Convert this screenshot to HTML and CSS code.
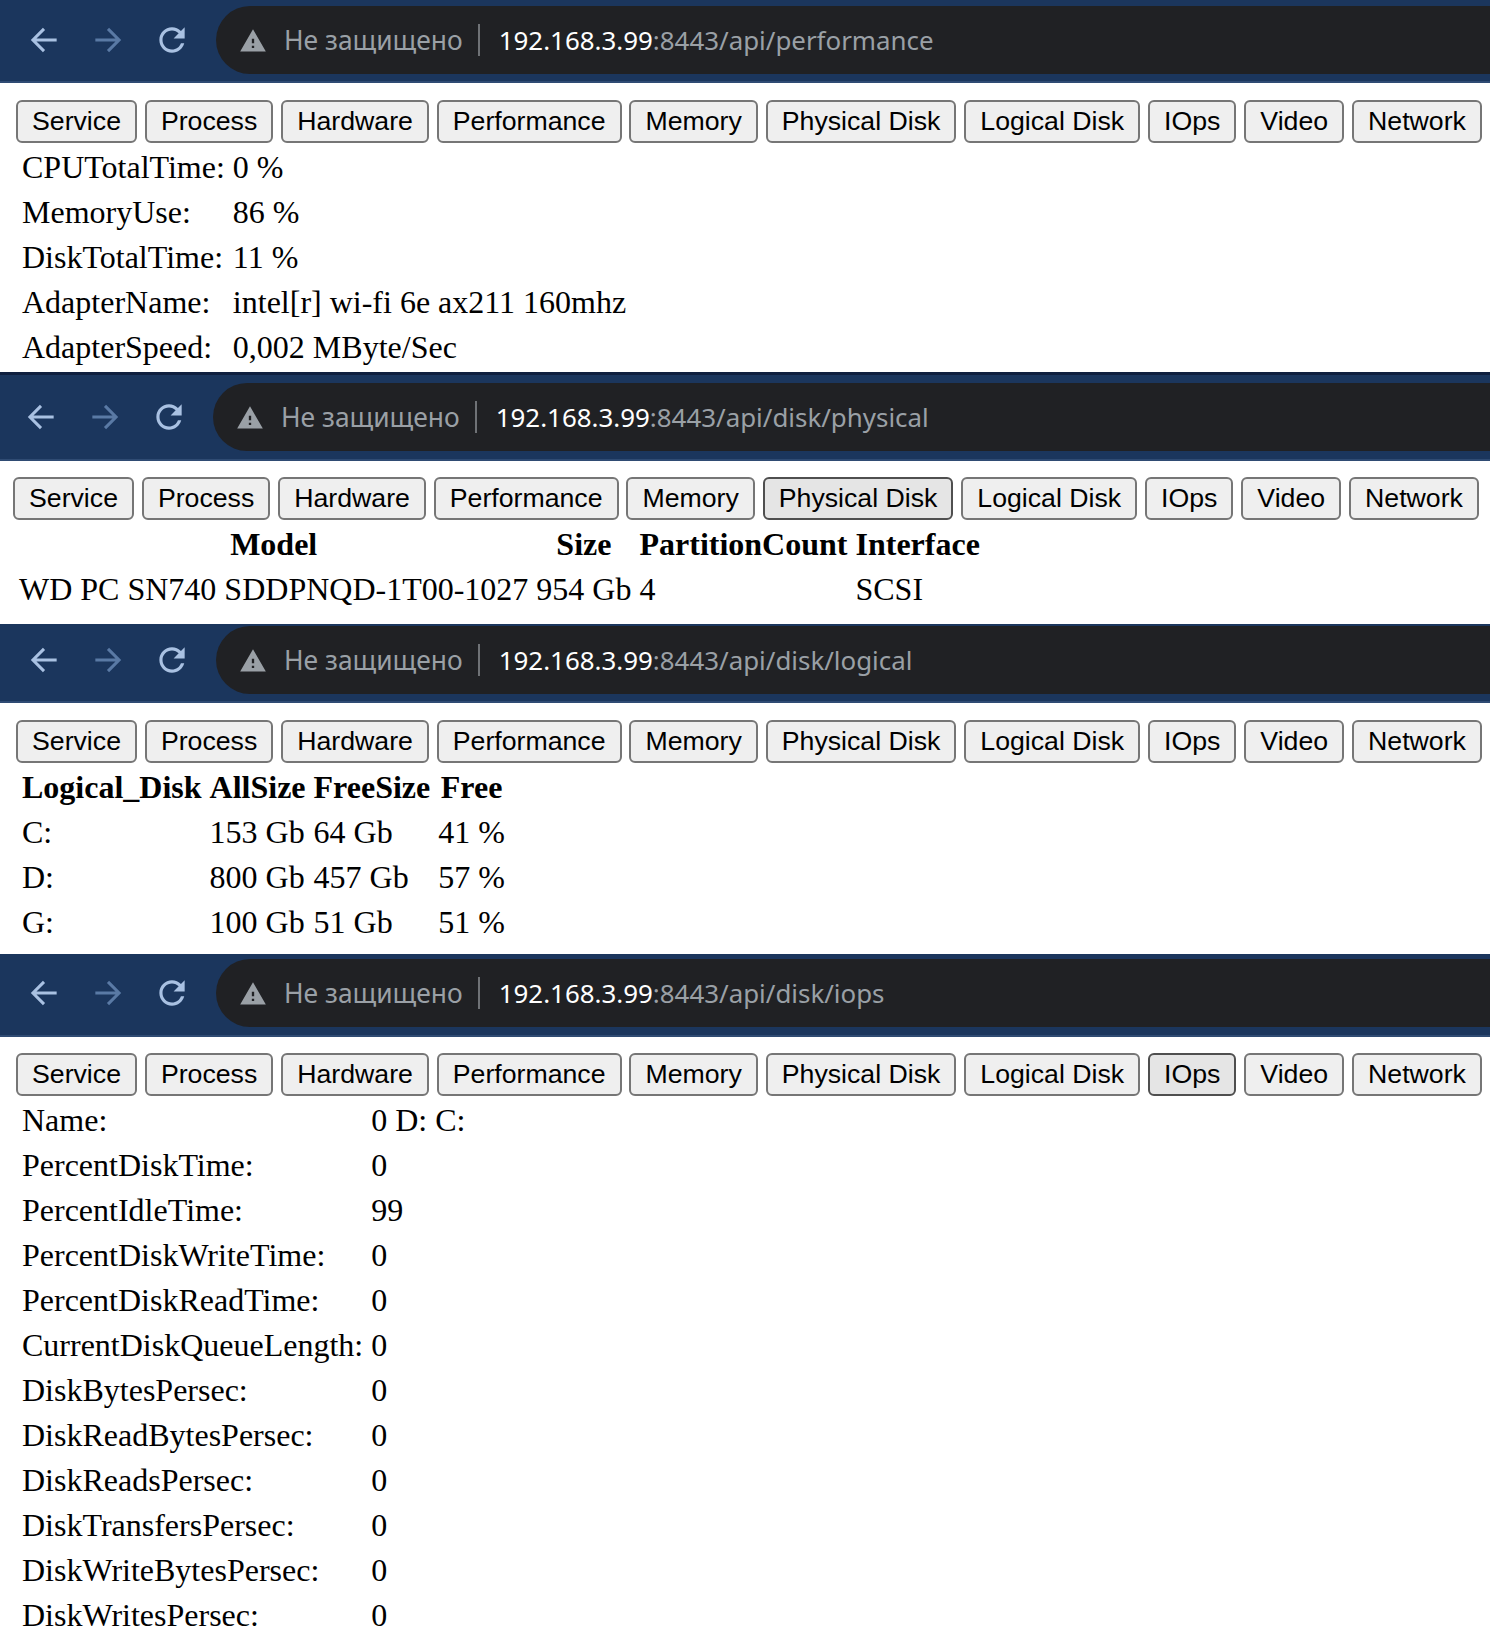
FILE: index.html
```html
<!DOCTYPE html>
<html lang="en">
<head>
<meta charset="UTF-8" />
<meta name="viewport" content="width=device-width, initial-scale=1" />
<title>API screenshots</title>
<link rel="stylesheet" href="styles.css">
</head>
<body>

<svg class="defs" width="0" height="0" aria-hidden="true">
  <symbol id="backIcon" viewBox="0 0 24 24"><path d="M20 12H5M12 5l-7 7 7 7" fill="none" stroke="currentColor" stroke-width="1.9"/></symbol>
  <symbol id="forwardIcon" viewBox="0 0 24 24"><path d="M4 12h15M12 5l7 7-7 7" fill="none" stroke="currentColor" stroke-width="1.9"/></symbol>
  <symbol id="reloadIcon" viewBox="0 0 24 24"><path d="M17.65 6.35C16.2 4.9 14.21 4 12 4c-4.42 0-7.99 3.58-7.99 8s3.57 8 7.99 8c3.73 0 6.84-2.55 7.73-6h-2.08c-.82 2.33-3.04 4-5.65 4-3.31 0-6-2.69-6-6s2.69-6 6-6c1.66 0 3.14.69 4.22 1.78L13 11h7V4l-2.35 2.35z" fill="currentColor"/></symbol>
  <symbol id="warnIcon" viewBox="0 0 24 24"><path d="M1 21h22L12 2 1 21zm12-3h-2v-2h2v2zm0-4h-2v-4h2v4z" fill="currentColor"/></symbol>
</svg>

<section class="shot shot-performance">
  <div class="toolbar">
    <svg class="nav-icon"><use href="#backIcon"/></svg>
    <svg class="nav-icon nav-icon-off"><use href="#forwardIcon"/></svg>
    <svg class="nav-icon"><use href="#reloadIcon"/></svg>
    <div class="omnibox">
      <svg class="warn-icon"><use href="#warnIcon"/></svg>
      <span class="not-secure">Не защищено</span>
      <span class="url"><span class="host">192.168.3.99</span>:8443/api/performance</span>
    </div>
  </div>
  <nav class="tabs">
    <button>Service</button><button>Process</button><button>Hardware</button><button>Performance</button><button>Memory</button><button>Physical Disk</button><button>Logical Disk</button><button>IOps</button><button>Video</button><button>Network</button>
  </nav>
  <table>
    <tr><td>CPUTotalTime:</td><td>0 %</td></tr>
    <tr><td>MemoryUse:</td><td>86 %</td></tr>
    <tr><td>DiskTotalTime:</td><td>11 %</td></tr>
    <tr><td>AdapterName:</td><td>intel[r] wi-fi 6e ax211 160mhz</td></tr>
    <tr><td>AdapterSpeed:</td><td>0,002 MByte/Sec</td></tr>
  </table>
</section>

<section class="shot shot-physical">
  <div class="toolbar">
    <svg class="nav-icon"><use href="#backIcon"/></svg>
    <svg class="nav-icon nav-icon-off"><use href="#forwardIcon"/></svg>
    <svg class="nav-icon"><use href="#reloadIcon"/></svg>
    <div class="omnibox">
      <svg class="warn-icon"><use href="#warnIcon"/></svg>
      <span class="not-secure">Не защищено</span>
      <span class="url"><span class="host">192.168.3.99</span>:8443/api/disk/physical</span>
    </div>
  </div>
  <nav class="tabs">
    <button>Service</button><button>Process</button><button>Hardware</button><button>Performance</button><button>Memory</button><button class="active">Physical Disk</button><button>Logical Disk</button><button>IOps</button><button>Video</button><button>Network</button>
  </nav>
  <table>
    <tr><th>Model</th><th>Size</th><th>PartitionCount</th><th>Interface</th></tr>
    <tr><td>WD PC SN740 SDDPNQD-1T00-1027</td><td>954 Gb</td><td>4</td><td>SCSI</td></tr>
  </table>
</section>

<section class="shot shot-logical">
  <div class="toolbar">
    <svg class="nav-icon"><use href="#backIcon"/></svg>
    <svg class="nav-icon nav-icon-off"><use href="#forwardIcon"/></svg>
    <svg class="nav-icon"><use href="#reloadIcon"/></svg>
    <div class="omnibox">
      <svg class="warn-icon"><use href="#warnIcon"/></svg>
      <span class="not-secure">Не защищено</span>
      <span class="url"><span class="host">192.168.3.99</span>:8443/api/disk/logical</span>
    </div>
  </div>
  <nav class="tabs">
    <button>Service</button><button>Process</button><button>Hardware</button><button>Performance</button><button>Memory</button><button>Physical Disk</button><button>Logical Disk</button><button>IOps</button><button>Video</button><button>Network</button>
  </nav>
  <table>
    <tr><th>Logical_Disk</th><th>AllSize</th><th>FreeSize</th><th>Free</th></tr>
    <tr><td>C:</td><td>153 Gb</td><td>64 Gb</td><td>41 %</td></tr>
    <tr><td>D:</td><td>800 Gb</td><td>457 Gb</td><td>57 %</td></tr>
    <tr><td>G:</td><td>100 Gb</td><td>51 Gb</td><td>51 %</td></tr>
  </table>
</section>

<section class="shot shot-iops">
  <div class="toolbar">
    <svg class="nav-icon"><use href="#backIcon"/></svg>
    <svg class="nav-icon nav-icon-off"><use href="#forwardIcon"/></svg>
    <svg class="nav-icon"><use href="#reloadIcon"/></svg>
    <div class="omnibox">
      <svg class="warn-icon"><use href="#warnIcon"/></svg>
      <span class="not-secure">Не защищено</span>
      <span class="url"><span class="host">192.168.3.99</span>:8443/api/disk/iops</span>
    </div>
  </div>
  <nav class="tabs">
    <button>Service</button><button>Process</button><button>Hardware</button><button>Performance</button><button>Memory</button><button>Physical Disk</button><button>Logical Disk</button><button class="active">IOps</button><button>Video</button><button>Network</button>
  </nav>
  <table>
    <tr><td>Name:</td><td>0 D: C:</td></tr>
    <tr><td>PercentDiskTime:</td><td>0</td></tr>
    <tr><td>PercentIdleTime:</td><td>99</td></tr>
    <tr><td>PercentDiskWriteTime:</td><td>0</td></tr>
    <tr><td>PercentDiskReadTime:</td><td>0</td></tr>
    <tr><td>CurrentDiskQueueLength:</td><td>0</td></tr>
    <tr><td>DiskBytesPersec:</td><td>0</td></tr>
    <tr><td>DiskReadBytesPersec:</td><td>0</td></tr>
    <tr><td>DiskReadsPersec:</td><td>0</td></tr>
    <tr><td>DiskTransfersPersec:</td><td>0</td></tr>
    <tr><td>DiskWriteBytesPersec:</td><td>0</td></tr>
    <tr><td>DiskWritesPersec:</td><td>0</td></tr>
  </table>
</section>

</body>
</html>
```

FILE: styles.css
```css
html, body {
  margin: 0;
  background: #fff;
  overflow: hidden;
}
body {
  font-family: "Liberation Serif", serif;
  font-size: 32px;
  color: #000;
}
.defs {
  display: block;
  height: 0;
}

/* each section is one browser window */
.shot {
  overflow: hidden;
}
.shot-performance {
  height: 372px;
}
.shot-physical {
  height: 252px;
  border-top: 3px solid #10203f;
  box-sizing: border-box;
}
.shot-logical {
  height: 330px;
}
.shot-iops {
  height: 696px;
}

.toolbar {
  display: flex;
  align-items: center;
  gap: 26px;
  box-sizing: border-box;
  height: 83px;
  padding: 6px 0 7px 25px;
  background: #1b365d;
  border-bottom: 2px solid #2f4b73;
}
.shot-physical .toolbar {
  height: 86px;
  padding: 8px 0 8px 22px;
}
.shot-logical .toolbar {
  height: 79px;
  padding: 2px 0 7px 25px;
}
.shot-iops .toolbar {
  padding: 5px 0 8px 25px;
}
.nav-icon {
  flex: none;
  width: 38px;
  height: 38px;
  color: #a9c1e2;
}
.nav-icon-off {
  color: #5a7aa5;
}
.omnibox {
  flex: 1;
  display: flex;
  align-items: center;
  align-self: stretch;
  margin-left: -1px;
  padding-left: 23px;
  background: #202124;
  border-radius: 34px 0 0 34px;
  font-family: "Noto Sans", sans-serif;
  font-size: 26.4px;
  white-space: nowrap;
  color: #9aa0a6;
}
.warn-icon {
  flex: none;
  width: 28px;
  height: 28px;
  margin-top: 2px;
  color: #9aa0a6;
}
.not-secure {
  margin-left: 17px;
  padding-right: 15px;
  border-right: 2px solid #6f7276;
  line-height: 32px;
}
.url {
  margin-left: 19px;
  font-size: 25.9px;
}
.host {
  color: #fff;
}

.tabs {
  display: flex;
  gap: 7.9px;
  padding: 17px 0 0 16px;
}
.shot-physical .tabs {
  padding: 16px 0 0 13px;
}
.shot-iops .tabs {
  padding-top: 16px;
}
button {
  flex: none;
  height: 43px;
  padding: 0 14px;
  font-family: "Liberation Sans", Arial, sans-serif;
  font-size: 26.7px;
  color: #000;
  background: #efefef;
  border: 2px solid #767676;
  border-radius: 6px;
}
button.active {
  background: #e5e5e5;
  border-color: #4f4f4f;
}

table {
  margin: 0 0 0 16px;
  border-spacing: 4px;
}
.shot-physical table {
  margin-left: 13px;
}
td, th {
  padding: 2px;
  line-height: 37px;
  white-space: nowrap;
}
td {
  text-align: left;
}
```
